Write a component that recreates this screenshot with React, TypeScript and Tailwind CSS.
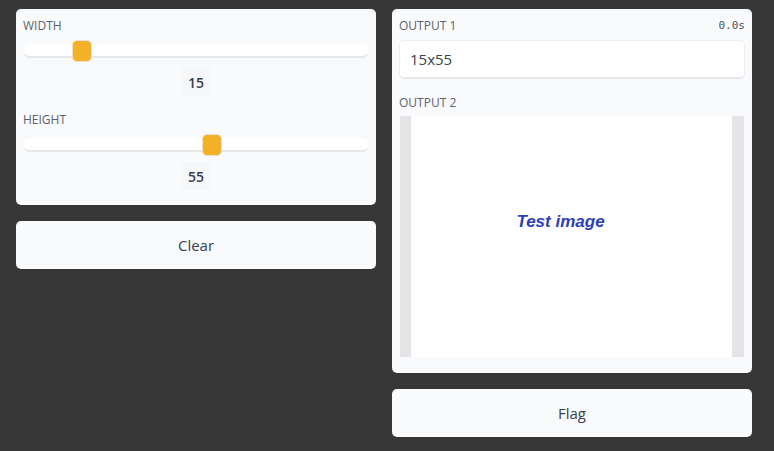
import { useState } from 'react'

const font = { fontFamily: '"Open Sans", "Noto Sans", sans-serif' }

function Slider({ label, value, onChange }: { label: string; value: number; onChange: (v: number) => void }) {
  return (
    <div className="flex flex-col">
      <div className="h-4 text-[12px] leading-4 text-[#5b6170] uppercase">{label}</div>
      <div className="relative mt-[6px] h-[22px] flex items-center">
        <div className="w-full h-[14px] rounded-full bg-white border-b-2 border-[#e5e7eb]" />
        <input
          type="range"
          min={0}
          max={100}
          value={value}
          onChange={e => onChange(Number(e.target.value))}
          className="absolute inset-0 opacity-0 cursor-pointer"
        />
        <div
          className="absolute top-0 w-5 h-[22px] rounded-[5px] bg-[#f3b127] border border-[#e6e2d8] pointer-events-none"
          style={{ left: `${(value / 100) * 325}px` }}
        />
      </div>
      <div className="mt-[6px] flex justify-center">
        <div className="w-[30px] h-[28px] flex items-center justify-center rounded bg-[#f6f7f9] text-[14px] font-semibold text-[#374151]">
          {value}
        </div>
      </div>
    </div>
  )
}

export default function App() {
  const [width, setWidth] = useState(15)
  const [height, setHeight] = useState(55)

  return (
    <div className="w-[774px] h-[451px] bg-[#363636] flex gap-4 pl-4 pr-[22px] pt-[9px]" style={font}>
      <div className="w-[360px] flex flex-col gap-4">
        <div className="bg-[#f9fafb] rounded-[5px] px-[7px] pt-[9px] pb-[15px] flex flex-col gap-[16px]">
          <Slider label="Width" value={width} onChange={setWidth} />
          <Slider label="Height" value={height} onChange={setHeight} />
        </div>
        <button
          onClick={() => { setWidth(15); setHeight(55) }}
          className="h-[48px] bg-[#f9fafb] rounded-[5px] text-[15px] font-medium text-[#374151]"
        >
          Clear
        </button>
      </div>

      <div className="w-[360px] flex flex-col gap-4">
        <div className="bg-[#f9fafb] rounded-[5px] px-[7px] pt-[9px] pb-4 flex flex-col">
          <div className="h-4 flex items-center justify-between">
            <span className="text-[12px] text-[#5b6170]">OUTPUT 1</span>
            <span className="text-[11px] text-[#4b5563]" style={{ fontFamily: '"DejaVu Sans Mono", monospace' }}>0.0s</span>
          </div>
          <div className="mt-[6px] h-[39px] bg-white rounded-[5px] border border-[#eceef1] border-b-2 border-b-[#e5e7eb] flex items-center px-[10px] text-[15px] text-[#374151]">
            {width}x{height}
          </div>
          <div className="mt-[16px] h-4 text-[12px] leading-4 text-[#5b6170]">OUTPUT 2</div>
          <div className="mt-[5px] mx-px h-[241px] flex">
            <div className="w-[11px] bg-[#e4e4e7]" />
            <div className="flex-1 bg-white flex items-center justify-center pb-[30px] pr-[22px]">
              <span
                className="text-[17px] font-bold italic text-[#2c3eb8]"
                style={{ fontFamily: '"Liberation Sans", Arial, sans-serif' }}
              >
                Test image
              </span>
            </div>
            <div className="w-[12px] bg-[#e4e4e7]" />
          </div>
        </div>
        <button className="h-[48px] bg-[#f9fafb] rounded-[5px] text-[15px] font-medium text-[#374151]">Flag</button>
      </div>
    </div>
  )
}
